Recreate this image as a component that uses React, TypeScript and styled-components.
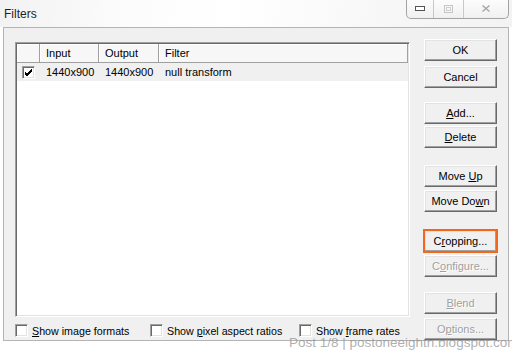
import React from 'react'
import styled, { createGlobalStyle, css } from 'styled-components'

const GlobalStyle = createGlobalStyle`
  html, body {
    margin: 0;
    padding: 0;
    background: #fff;
  }
  body {
    font-family: 'Liberation Sans', Arial, sans-serif;
    font-size: 11px;
    color: #000;
  }
`

const Window = styled.div`
  position: relative;
  width: 512px;
  height: 354px;
  overflow: hidden;
  background: #fff;
`

const TitleBar = styled.div`
  height: 27px;
  display: flex;
  justify-content: space-between;
  align-items: flex-start;
  padding: 0 3px 0 4px;
  box-sizing: border-box;
  background: linear-gradient(100deg, #f2f2f2 0%, #fcfcfc 25%, #ffffff 45%, #f6f6f6 80%, #f3f3f3 100%);
`

const Title = styled.span`
  margin-top: 7px;
  font-size: 12px;
  color: #1e1e1e;
`

const Caption = styled.div`
  display: flex;
  margin-top: -1px;
  height: 19px;
  border: 1px solid #a3a3a3;
  border-top: none;
  border-radius: 0 0 5px 5px;
  background: linear-gradient(#fdfdfd, #f0f0f0);
`

const CaptionBtn = styled.div<{ $w: number; $last?: boolean }>`
  width: ${p => p.$w}px;
  display: flex;
  align-items: center;
  justify-content: center;
  border-right: ${p => (p.$last ? 'none' : '1px solid #c8c8c8')};
`

const Panel = styled.div`
  margin: 0 3px 0 3px;
  height: 314px;
  box-sizing: border-box;
  border: 1px solid #b4b4b4;
  background: #f0f0f0;
  display: flex;
  gap: 14px;
  padding: 11px 11px 0 11px;
`

const LeftCol = styled.div`
  flex: 1;
  display: flex;
  flex-direction: column;
  padding-top: 3px;
  padding-bottom: 3px;
`

const ListBox = styled.div`
  flex: 1;
  background: #fff;
  border: 1px solid;
  border-color: #a0a0a0 #fff #fff #a0a0a0;
  box-shadow: inset 1px 1px #696969, inset -1px -1px #e3e3e3;
  padding: 1px;
`

const HeaderRow = styled.div`
  display: flex;
  height: 19px;
  background: #f7f7f7;
`

const HeadCell = styled.div<{ $w?: number }>`
  ${p => (p.$w ? css`width: ${p.$w}px;` : css`flex: 1;`)}
  box-sizing: border-box;
  padding-left: 6px;
  display: flex;
  align-items: center;
  border-right: 1px solid #a0a0a0;
  border-bottom: 1px solid #a0a0a0;
  box-shadow: inset 1px 1px #fff;
`

const Row = styled.div`
  display: flex;
  height: 18px;
  background: #f0f0f0;
`

const Cell = styled.div<{ $w?: number; $pad?: number }>`
  ${p => (p.$w ? css`width: ${p.$w}px;` : css`flex: 1;`)}
  box-sizing: border-box;
  padding-left: ${p => p.$pad ?? 6}px;
  display: flex;
  align-items: center;
`

const Box = styled.span`
  width: 13px;
  height: 13px;
  box-sizing: border-box;
  background: #fff;
  border: 1px solid;
  border-color: #a0a0a0 #fff #fff #a0a0a0;
  box-shadow: inset 1px 1px #696969, inset -1px -1px #e3e3e3;
  display: inline-flex;
  align-items: center;
  justify-content: center;
  flex-shrink: 0;
`

const Options = styled.div`
  display: flex;
  height: 13px;
  margin-top: 7px;
`

const Check = styled.label<{ $w?: number }>`
  display: flex;
  align-items: center;
  gap: 4px;
  ${p => (p.$w ? css`width: ${p.$w}px;` : '')}
  white-space: nowrap;
  font-size: 10.7px;
`

const RightCol = styled.div`
  width: 73px;
  display: flex;
  flex-direction: column;
`

const Btn = styled.button<{ $gap?: number; $disabled?: boolean; $marked?: boolean }>`
  height: 22px;
  width: 73px;
  margin-top: ${p => p.$gap ?? 0}px;
  padding: 0;
  font-family: 'Liberation Sans', Arial, sans-serif;
  font-size: 11px;
  background: #f0f0f0;
  color: ${p => (p.$disabled ? '#a0a0a0' : '#000')};
  ${p => p.$disabled && css`text-shadow: 1px 1px #fff;`}
  border: 1px solid;
  border-color: #fff #696969 #696969 #fff;
  box-shadow: inset -1px -1px #a0a0a0, inset 1px 1px #e3e3e3;
  ${p => p.$marked && css`outline: 2px solid #f4661b; outline-offset: -1px;`}
  u { text-decoration: underline; }
`

const Watermark = styled.div`
  position: absolute;
  left: 289px;
  top: 335px;
  font-size: 13.5px;
  color: rgba(140, 140, 140, 0.7);
  white-space: nowrap;
`

const Tick = () => (
  <svg width="9" height="9" viewBox="0 0 9 9">
    <path d="M1 4 L3 6 L8 1 M1 5 L3 7 L8 2 M1 6 L3 8 L8 3" stroke="#000" strokeWidth="1" fill="none" />
  </svg>
)

export default function App() {
  return (
    <Window>
      <GlobalStyle />
      <TitleBar>
        <Title>Filters</Title>
        <Caption>
          <CaptionBtn $w={26}>
            <svg width="10" height="5"><rect x="0.5" y="0.5" width="9" height="4" fill="#fff" stroke="#555" /></svg>
          </CaptionBtn>
          <CaptionBtn $w={29}>
            <svg width="9" height="8"><rect x="0.5" y="0.5" width="8" height="7" fill="none" stroke="#c6c6c6" /><rect x="2.5" y="2.5" width="4" height="3" fill="none" stroke="#d0d0d0" /></svg>
          </CaptionBtn>
          <CaptionBtn $w={44} $last>
            <svg width="8" height="7"><path d="M0.5 0.5 L7.5 6.5 M7.5 0.5 L0.5 6.5" stroke="#a8a8a8" strokeWidth="1.4" /></svg>
          </CaptionBtn>
        </Caption>
      </TitleBar>
      <Panel>
        <LeftCol>
          <ListBox>
            <HeaderRow>
              <HeadCell $w={23} />
              <HeadCell $w={59}>Input</HeadCell>
              <HeadCell $w={60}>Output</HeadCell>
              <HeadCell>Filter</HeadCell>
            </HeaderRow>
            <Row>
              <Cell $w={23} $pad={5}>
                <Box><Tick /></Box>
              </Cell>
              <Cell $w={59}>1440x900</Cell>
              <Cell $w={60}>1440x900</Cell>
              <Cell>null transform</Cell>
            </Row>
          </ListBox>
          <Options>
            <Check $w={135}><Box /><span><u>S</u>how image formats</span></Check>
            <Check $w={149}><Box /><span>Show <u>p</u>ixel aspect ratios</span></Check>
            <Check><Box /><span>Show <u>f</u>rame rates</span></Check>
          </Options>
        </LeftCol>
        <RightCol>
          <Btn>OK</Btn>
          <Btn $gap={5}>Cancel</Btn>
          <Btn $gap={14}><u>A</u>dd...</Btn>
          <Btn $gap={2}><u>D</u>elete</Btn>
          <Btn $gap={17}>Move <u>U</u>p</Btn>
          <Btn $gap={3}>Move Do<u>w</u>n</Btn>
          <Btn $gap={18} $marked>C<u>r</u>opping...</Btn>
          <Btn $gap={3} $disabled>C<u>o</u>nfigure...</Btn>
          <Btn $gap={15} $disabled><u>B</u>lend</Btn>
          <Btn $gap={4} $disabled>O<u>p</u>tions...</Btn>
        </RightCol>
      </Panel>
      <Watermark>Post 1/8 | postoneeighth.blogspot.com</Watermark>
    </Window>
  )
}
